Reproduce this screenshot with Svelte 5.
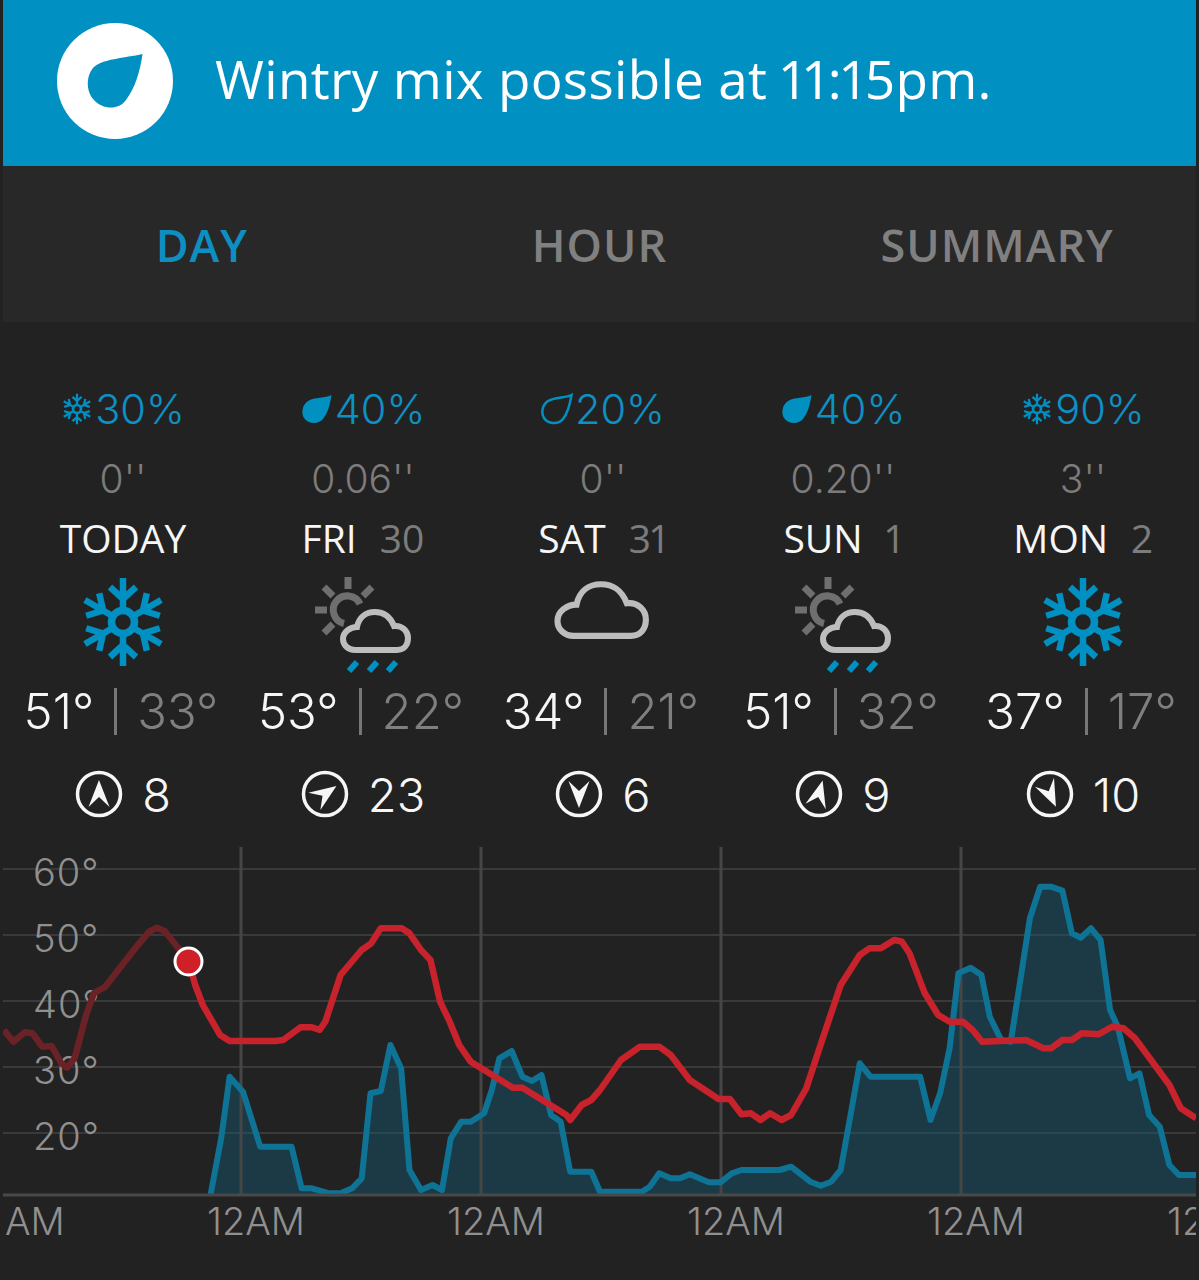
<script>
  // zoomed-trace helpers: chart traces were read off two crops, so map them back to page px
  const leftPt = ([x, y]) => `${(x / 2.613).toFixed(1)},${(845 + y / 3).toFixed(1)}`;
  const rightPt = ([x, y]) => `${(600 + x / 2.617).toFixed(1)},${(845 + y / 3).toFixed(1)}`;

  const tempPast = [[10,555],[35,590],[65,562],[85,565],[110,605],[135,603],[160,655],[175,668],[195,640],[225,510],[245,445],[275,425],[360,300],[390,260],[410,248],[430,258],[470,315],[493,350]];
  const tempLeft = [[493,350],[510,420],[530,480],[575,570],[600,588],[720,588],[740,585],[785,547],[815,547],[835,555],[850,530],[890,390],[945,315],[970,295],[995,250],[1050,250],[1070,265],[1100,315],[1125,345],[1150,470],[1175,530],[1200,600],[1230,650],[1340,728],[1365,728],[1480,810],[1490,825],[1520,780],[1545,765]];
  const tempRight = [[0,735],[55,645],[105,605],[155,605],[185,630],[235,705],[310,762],[340,762],[370,808],[395,805],[420,825],[445,805],[475,825],[500,810],[540,730],[580,590],[630,420],[680,330],[705,310],[735,310],[770,285],[790,290],[810,325],[850,445],[885,510],[915,530],[950,530],[975,555],[1000,590],[1115,585],[1160,610],[1180,610],[1210,585],[1235,585],[1260,565],[1305,568],[1340,545],[1370,550],[1400,580],[1490,720],[1520,790],[1560,820]];
  const rainLeft = [[550,1050],[578,880],[600,695],[635,740],[680,905],[762,905],[788,1030],[815,1030],[860,1045],[890,1045],[920,1030],[945,1000],[968,745],[995,738],[1020,600],[1048,670],[1070,975],[1100,1035],[1130,1020],[1155,1035],[1178,880],[1205,830],[1230,830],[1265,805],[1285,735],[1305,640],[1337,618],[1365,695],[1390,708],[1415,690],[1440,810],[1465,830],[1490,980],[1545,980]];
  const rainRight = [[0,1040],[110,1040],[130,1025],[155,985],[185,1000],[210,1000],[235,988],[285,1012],[315,1012],[345,985],[370,975],[470,975],[500,965],[550,1010],[578,1022],[605,1010],[630,975],[680,655],[708,695],[838,695],[865,825],[890,745],[915,610],[938,385],[970,368],[998,390],[1020,515],[1050,585],[1075,590],[1125,220],[1152,125],[1180,125],[1210,137],[1235,265],[1258,278],[1285,250],[1310,285],[1335,495],[1355,545],[1387,700],[1412,685],[1437,810],[1465,845],[1490,960],[1515,990],[1560,990]];

  const pastLine = tempPast.map(leftPt).join(" ");
  const tempLine = [...tempLeft.map(leftPt), ...tempRight.map(rightPt)].join(" ");
  const rainLine = [...rainLeft.map(leftPt), ...rainRight.map(rightPt)].join(" ");
  const rainArea = `${rainLine} 1196,1195 210,1195`;

  const days = [
    { pct: "30%", kind: "snow", amount: `0''`, name: "TODAY", date: "", sky: "flake", hi: "51°", lo: "33°", wind: 8, dir: 0 },
    { pct: "40%", kind: "rain", amount: `0.06''`, name: "FRI", date: "30", sky: "sun", hi: "53°", lo: "22°", wind: 23, dir: 55 },
    { pct: "20%", kind: "light", amount: `0''`, name: "SAT", date: "31", sky: "cloud", hi: "34°", lo: "21°", wind: 6, dir: 180 },
    { pct: "40%", kind: "rain", amount: `0.20''`, name: "SUN", date: "1", sky: "sun", hi: "51°", lo: "32°", wind: 9, dir: 15 },
    { pct: "90%", kind: "snow", amount: `3''`, name: "MON", date: "2", sky: "flake", hi: "37°", lo: "17°", wind: 10, dir: 155 },
  ];

  const gridY = [869, 935, 1001, 1067, 1133];
  const yLabels = [["60°", 886], ["50°", 952], ["40°", 1018], ["30°", 1084], ["20°", 1150]];
  const midnights = [241, 481, 721, 961];
  const arms = [0, 60, 120, 180, 240, 300];
  const dropPath = "M29.5 1C24 4 12 3 6 7C0 11-1 19 2 24C6 30 16 31 21 25C26 19 28 10 29.5 1Z";
  const cloudPath = "M55 83H97C104 83 108 78 108 71C108 64 102 58 94 59C90 49 84 45 75 45C66 45 59 50 57 60C50 60 43 65 43 72C43 78 48 83 55 83Z";
</script>

{#snippet flake(size)}
  <svg class="flake" width={size} height={size} viewBox="-46 -46 92 92">
    {#each arms as a}
      <g transform="rotate({a})">
        <path d="M0 -14V-44M-13 -35L0 -23L13 -35" />
      </g>
    {/each}
    <circle r="11.5" />
  </svg>
{/snippet}

{#snippet sunCloud()}
  <svg width="120" height="110" viewBox="3 0 120 110">
    <g class="rays">
      <path d="M48 10V22M15 43H27M24 20L33 29M72 20L63 29M24 66L33 57" />
      <path d="M60 37A14 14 0 1 0 44 56.5" />
    </g>
    <path class="cloud" d={cloudPath} />
    <path class="sleet" d="M49 104L57 95M69 104L77 95M88 104L96 95" />
  </svg>
{/snippet}

{#snippet plainCloud()}
  <svg width="120" height="110" viewBox="0 0 120 110">
    <g transform="translate(-44 -44) scale(1.36)">
      <path class="cloud thin" d={cloudPath} />
    </g>
  </svg>
{/snippet}

<main class="screen">
  <header class="alert">
    <div class="badge">
      <svg width="116" height="116" viewBox="0 0 116 116">
        <path d="M85.5 31C68 35 44 36 36 45C28 55 30 70 37 77C45 86 61 88 69 77C78 65 83 49 85.5 31Z" />
      </svg>
    </div>
    <span>Wintry mix possible at 11:15pm.</span>
  </header>

  <nav class="tabs">
    <span class="active">DAY</span>
    <span>HOUR</span>
    <span>SUMMARY</span>
  </nav>

  <section class="forecast">
    {#each days as d}
      <div class="day">
        <div class="pct">
          {#if d.kind === "snow"}
            {@render flake(32)}
          {:else}
            <svg class="drop" class:outline={d.kind === "light"} width="32" height="32" viewBox="-1 -1 32 32"><path d={dropPath} /></svg>
          {/if}
          {d.pct}
        </div>
        <div class="amount">{d.amount}</div>
        <div class="name">{d.name}{#if d.date}<em>{d.date}</em>{/if}</div>
        <div class="sky">
          {#if d.sky === "flake"}
            {@render flake(92)}
          {:else if d.sky === "sun"}
            {@render sunCloud()}
          {:else}
            {@render plainCloud()}
          {/if}
        </div>
        <div class="temps"><span>{d.hi}</span><i></i><span class="lo">{d.lo}</span></div>
        <div class="wind">
          <svg width="48" height="48" viewBox="-24 -24 48 48">
            <circle r="21.5" />
            <path transform="rotate({d.dir})" d="M0 -14L10.5 13L0 3L-10.5 13Z" />
          </svg>
          {d.wind}
        </div>
      </div>
    {/each}
  </section>

  <svg class="chart" width="1199" height="433" viewBox="0 847 1199 433">
    <defs>
      <clipPath id="plot"><rect x="3" y="847" width="1193" height="433" /></clipPath>
    </defs>
    <g clip-path="url(#plot)">
      {#each gridY as y}
        <line class="grid" x1="3" x2="1196" y1={y} y2={y} />
      {/each}
      <polygon class="rain-fill" points={rainArea} />
      {#each midnights as x}
        <line class="grid mid" x1={x} x2={x} y1="847" y2="1195" />
      {/each}
      <polyline class="rain-line" points={rainLine} />
      <line class="axis" x1="3" x2="1196" y1="1195" y2="1195" />
      {#each yLabels as [t, y]}
        <text class="deg" x="33" {y}>{t}</text>
      {/each}
      <polyline class="temp past" points={pastLine} />
      <polyline class="temp" points={tempLine} />
      <circle class="now" cx="188.5" cy="961.5" r="13.5" />
      <text x="5" y="1235">AM</text>
      {#each [207, 447, 687, 927, 1167] as x}
        <text {x} y="1235">12AM</text>
      {/each}
    </g>
  </svg>
</main>

<style>
  :global(body) { margin: 0; background: #222; }
  .screen { width: 1199px; height: 1280px; overflow: hidden; background: #222; color: #f6f6f6; font-family: Inter, "Open Sans", sans-serif; font-weight: 300; }

  .alert { margin: 0 3px; height: 166px; background: #0090c2; display: flex; align-items: center; gap: 42px; padding: 0 0 4px 54px; box-sizing: border-box; font-family: "Open Sans", sans-serif; font-size: 53px; letter-spacing: 0.3px; font-feature-settings: "pnum"; color: #fff; font-weight: 400; }
  .alert span { margin-bottom: 6px; }
  .badge { width: 116px; height: 116px; border-radius: 50%; background: #fff; }
  .badge svg { display: block; }
  .badge path { fill: #0090c2; }

  .tabs { margin: 0 3px; height: 156px; background: #282828; display: grid; grid-template-columns: repeat(3, 1fr); align-items: center; text-align: center; font-family: "Open Sans", sans-serif; font-size: 45px; letter-spacing: 1px; font-weight: 600; color: #808080; }
  .tabs .active { color: #0d8fc2; }

  .forecast { display: grid; grid-template-columns: repeat(5, 240px); margin-left: 3px; padding: 63px 0 28px; }
  .day { display: flex; flex-direction: column; align-items: center; }
  .pct { height: 48px; display: flex; align-items: center; gap: 2px; font-size: 41.5px; color: #0d90c4; }
  .amount { height: 48px; margin-top: 22px; line-height: 48px; font-size: 39px; color: #7c7c7c; }
  .name { height: 48px; margin-top: 11px; line-height: 48px; font-size: 39px; font-weight: 400; font-family: "Open Sans", sans-serif; font-feature-settings: "pnum"; }
  .name em { font-style: normal; color: #7c7c7c; margin-left: 23px; }
  .sky { height: 110px; margin-top: 5px; width: 120px; display: flex; align-items: center; justify-content: center; }
  .temps { height: 48px; margin-top: 10px; padding-right: 4px; display: flex; align-items: center; gap: 20px; font-size: 49px; white-space: nowrap; }
  .temps i { width: 3px; height: 47px; background: #777; }
  .temps .lo { color: #7f7f7f; }
  .wind { height: 50px; margin-top: 34px; display: flex; align-items: center; gap: 19px; font-size: 47px; }
  .wind circle { fill: none; stroke: #f6f6f6; stroke-width: 3.5; }
  .wind path { fill: #f6f6f6; }

  .flake { display: block; flex: none; }
  .flake path { fill: none; stroke: #0090c2; stroke-width: 6.5; }
  .flake circle { fill: #222; stroke: #0090c2; stroke-width: 7.5; }
  .drop { flex: none; }
  .drop path { fill: #0090c2; }
  .drop.outline path { fill: none; stroke: #0090c2; stroke-width: 2.5; }
  .cloud { fill: #222; stroke: #bdbdbd; stroke-width: 6; }
  .cloud.thin { stroke-width: 4.5; }
  .rays path { fill: none; stroke: #6f6f6f; stroke-width: 7; }
  .sleet { fill: none; stroke: #0090c2; stroke-width: 6; }

  .chart { display: block; }
  .chart text { font-size: 38px; fill: #909090; }
  .chart text.deg { letter-spacing: 1px; }
  .grid { stroke: #3a3a3a; stroke-width: 2; }
  .grid.mid { stroke: #464646; stroke-width: 3; }
  .axis { stroke: #484848; stroke-width: 3; }
  .rain-fill { fill: rgba(20, 94, 124, 0.4); }
  .rain-line { fill: none; stroke: #0f7396; stroke-width: 6; stroke-linejoin: round; }
  .temp { fill: none; stroke: #c8232c; stroke-width: 6.5; stroke-linejoin: round; }
  .temp.past { stroke: #6b2226; }
  .now { fill: #cf2027; stroke: #fff; stroke-width: 3; }
</style>
